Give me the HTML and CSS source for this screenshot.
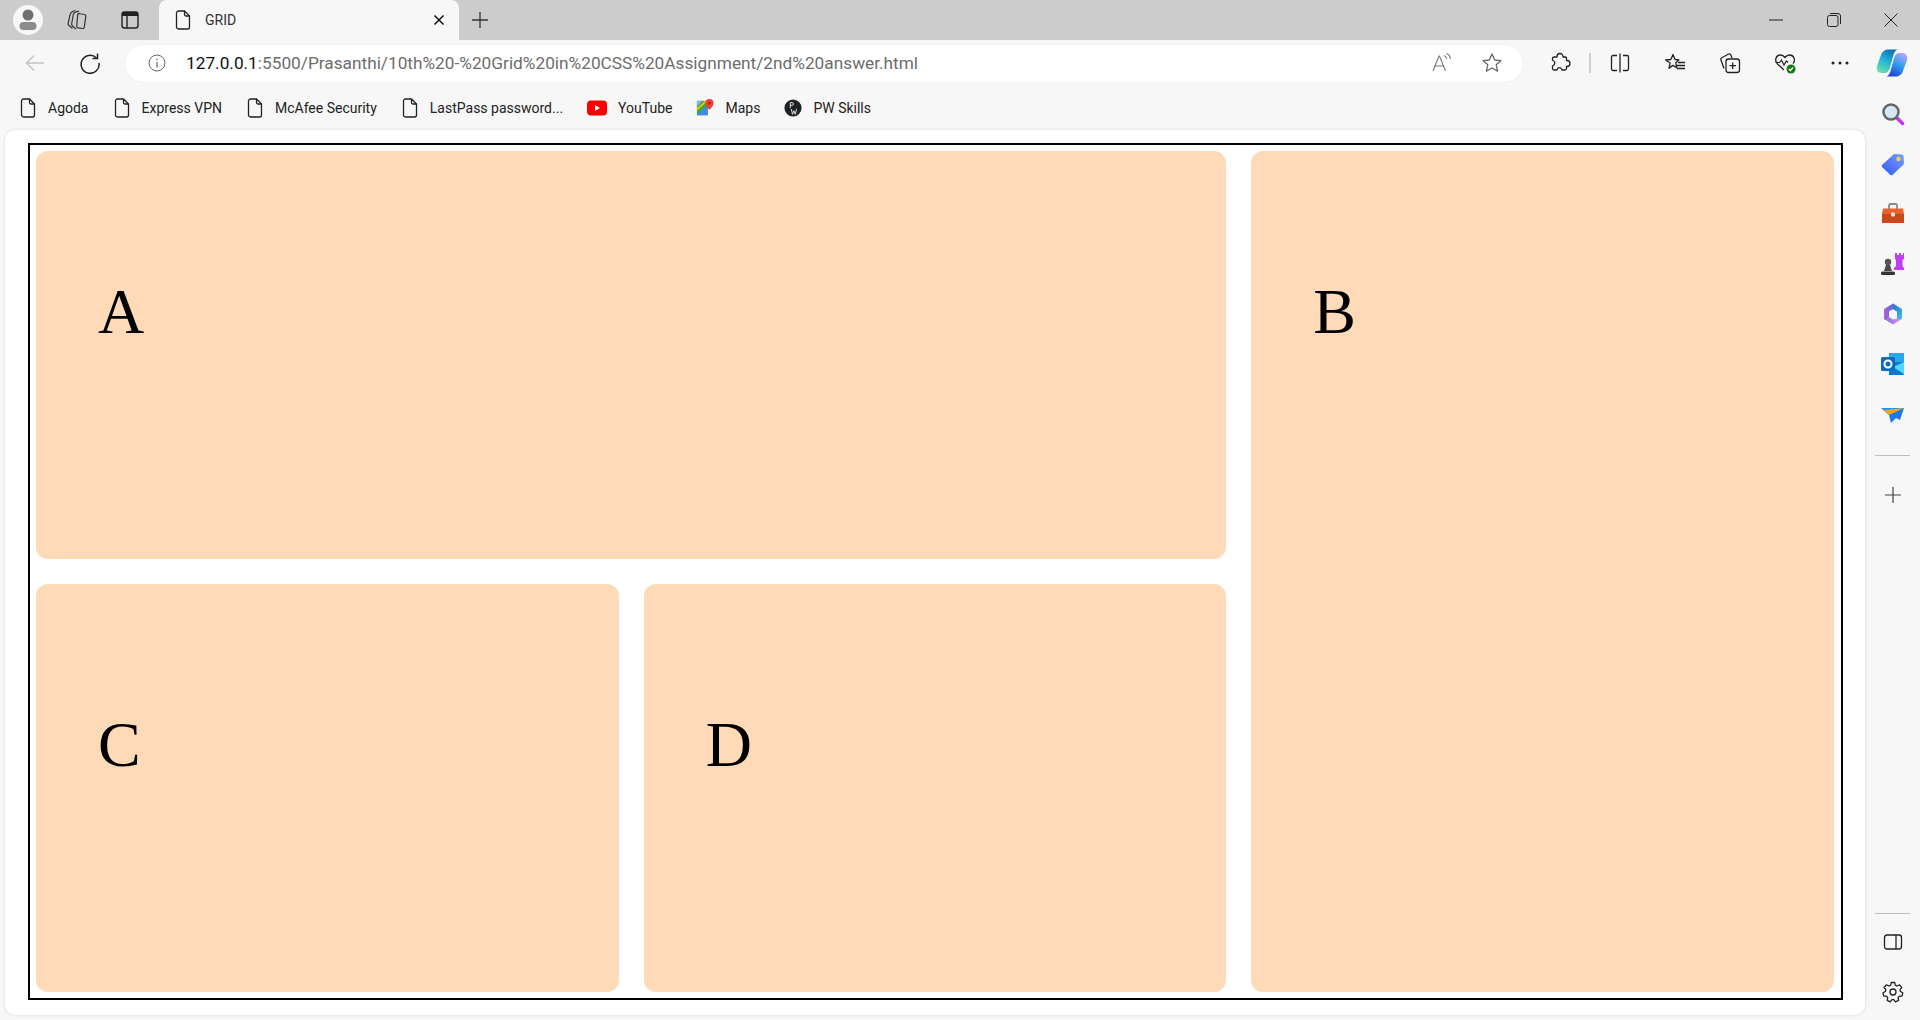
FILE: index.html
```html
<!doctype html>
<html lang="en">
<head>
  <meta charset="UTF-8" />
  <title>GRID</title>
  <link rel="stylesheet" href="styles.css">
</head>
<body>
<svg class="defs" width="0" height="0">
  <symbol id="page" viewBox="0 0 18 20">
    <path d="M4.500 1h6l5 5v11a2 2 0 0 1-2 2h-9a2 2 0 0 1-2-2V3a2 2 0 0 1 2-2z" fill="none" stroke="#222" stroke-width="1.300"/>
    <path d="M10.500 1v3.500a1.500 1.500 0 0 0 1.500 1.500h3.500" fill="none" stroke="#222" stroke-width="1.300"/>
  </symbol>
</svg>

<div class="browser">

  <!-- title bar -->
  <div class="titlebar">
    <div class="avatar">
      <svg width="18" height="22" viewBox="0 0 18 22"><circle cx="9" cy="6" r="5.500" fill="#707070"/><rect x=".5" y="13" width="17" height="8" rx="4" fill="#8c8c8c"/></svg>
    </div>
    <button class="btn">
      <svg width="24" height="24" viewBox="0 0 24 24" fill="none" stroke="#333" stroke-width="1.200" stroke-linejoin="round"><path d="M13 5.500l6.500 1a1.500 1.500 0 0 1 1.300 1.700l-1.500 11a1.500 1.500 0 0 1-1.700 1.300l-4.600-.7a1.500 1.500 0 0 1-1.300-1.700l1-11a1.500 1.500 0 0 1 1.800-1.600z"/><path d="M11 21 7.500 18c-.8-.7-1-1.500-.8-2.500l1.600-9c.2-1 1-2.300 2.700-2.700l3-.6"/><path d="M7.500 20.500 4 17.500c-.8-.7-1-1.500-.8-2.500L5 7c.3-1.300 1.200-3 3-3.700L10.500 2.500"/></svg>
    </button>
    <button class="btn">
      <svg width="20" height="20" viewBox="0 0 20 20" fill="none"><rect x="2" y="2" width="16" height="16" rx="2.500" stroke="#222" stroke-width="1.400"/><path d="M2 3.500A1.500 1.500 0 0 1 3.500 2h13A1.500 1.500 0 0 1 18 3.500V6H2z" fill="#222"/><path d="M7 6v12" stroke="#222" stroke-width="1.400"/></svg>
    </button>
    <div class="tab">
      <svg class="page-ico"><use href="#page"/></svg>
      <span class="tab-title">GRID</span>
      <svg class="tab-close" width="12" height="12" viewBox="0 0 12 12"><path d="M1.500 1.500l9 9m0-9l-9 9" stroke="#111" stroke-width="1.500"/></svg>
    </div>
    <button class="btn new-tab">
      <svg width="18" height="18" viewBox="0 0 18 18"><path d="M9 1v16M1 9h16" stroke="#333" stroke-width="1.300"/></svg>
    </button>
    <div class="win-controls">
      <div class="win-btn"><svg width="14" height="14" viewBox="0 0 14 14"><path d="M0 7h14" stroke="#222" stroke-width="1"/></svg></div>
      <div class="win-btn"><svg width="14" height="14" viewBox="0 0 14 14" fill="none" stroke="#222"><rect x=".5" y="2.500" width="10.500" height="11" rx="2"/><path d="M3 .5h8a2.500 2.500 0 0 1 2.500 2.500v8"/></svg></div>
      <div class="win-btn"><svg width="14" height="14" viewBox="0 0 14 14"><path d="M.5.5l13 13m0-13l-13 13" stroke="#222" stroke-width="1"/></svg></div>
    </div>
  </div>

  <!-- toolbar -->
  <div class="toolbar">
    <button class="btn">
      <svg width="20" height="18" viewBox="0 0 20 18" fill="none" stroke="#c4c4c4" stroke-width="1.400"><path d="M19 9H1.500M9 1.500 1.500 9 9 16.500"/></svg>
    </button>
    <button class="btn reload">
      <svg width="22" height="22" viewBox="0 0 22 22" fill="none" stroke="#222" stroke-width="1.500"><path d="M17.500 6A9 9 0 1 0 20 11"/><path d="M18.500 1.500V6.500H13.500"/></svg>
    </button>
    <div class="addressbar">
      <svg class="info" width="18" height="18" viewBox="0 0 18 18" fill="none" stroke="#666"><circle cx="9" cy="9" r="8"/><path d="M9 8v5.500M9 4.800v1.400" stroke-width="1.200"/></svg>
      <span class="url"><span class="host">127.0.0.1</span>:5500/Prasanthi/10th%20-%20Grid%20in%20CSS%20Assignment/2nd%20answer.html</span>
      <svg class="read-ico" width="22" height="22" viewBox="0 0 22 22" fill="none" stroke="#777" stroke-width="1.100"><path d="M2 19 8 4h.5l6 15M4 14h9"/><path d="M13 3.500c1.500.5 2.500 2 2.700 3.500M15.500 1.500c2.300 1 3.800 3 4 5.500"/></svg>
      <svg class="star-ico" width="22" height="22" viewBox="0 0 22 22" fill="none" stroke="#666" stroke-width="1.300"><path d="M11 2l2.700 6 6.300.6-4.800 4.200 1.400 6.400L11 16l-5.600 3.200 1.400-6.400L2 8.600 8.300 8z" stroke-linejoin="round"/></svg>
    </div>
    <div class="tools">
      <button class="btn">
        <svg width="22" height="22" viewBox="0 0 22 22" fill="none" stroke="#222" stroke-width="1.300" stroke-linejoin="round"><path d="M8 4.500a3 3 0 0 1 6 0v.5h2.500a1 1 0 0 1 1 1v2.500h.5a3 3 0 0 1 0 6h-.5v2a1.500 1.500 0 0 1-1.500 1.500h-2.500c-.5 0-.7-.3-.9-.8a2.300 2.300 0 0 0-4.300 0c-.2.500-.4.800-.9.800H5a1.500 1.500 0 0 1-1.500-1.500v-2.500l.5-.3a2.800 2.800 0 0 0 0-5.200l-.5-.3V6.500A1.500 1.500 0 0 1 5 5h3z"/></svg>
      </button>
      <div class="tool-sep"></div>
      <button class="btn">
        <svg width="22" height="22" viewBox="0 0 22 22" fill="none" stroke="#222" stroke-width="1.300"><path d="M8 3.500H4A1.500 1.500 0 0 0 2.500 5v12A1.500 1.500 0 0 0 4 18.500h4M14 3.500h4A1.500 1.500 0 0 1 19.500 5v12a1.500 1.500 0 0 1-1.500 1.500h-4M11 1.500v19"/></svg>
      </button>
      <button class="btn">
        <svg width="22" height="22" viewBox="0 0 22 22" fill="none" stroke="#222" stroke-width="1.300"><path d="M9 2.500l2 5 4 .3-3.200 3 1 5-3.800-2.400-4 2.900 1.200-5.300L1.500 8l5.300-.5z" stroke-linejoin="round"/><path d="M14 10.500h7M13 13.500h8M13 16.500h8"/></svg>
      </button>
      <button class="btn">
        <svg width="22" height="22" viewBox="0 0 22 22" fill="none" stroke="#222" stroke-width="1.300"><rect x="7" y="7" width="13.500" height="13.500" rx="2.500"/><path d="M13.700 10.500v6.500M10.500 13.700h6.500"/><path d="M5 16.500 2 8a2 2 0 0 1 1.300-2.500L9.500 2a2 2 0 0 1 2.500 1.300L13 6"/></svg>
      </button>
      <button class="btn">
        <svg width="24" height="24" viewBox="0 0 24 24" fill="none"><path d="M11 19 4.500 13C1 9.500 3 4 7.500 4c2 0 3.500 1.200 4.500 2.500C13 5.200 14.500 4 16.500 4c4.500 0 6.500 5 3.500 8.500" stroke="#222" stroke-width="1.300"/><path d="M2.500 11.500h4l2-2.500 2.500 5 2.500-4 1.500 1.500" stroke="#222" stroke-width="1.200"/><circle cx="18" cy="18" r="4.500" fill="#107c10"/><path d="M16 18l1.500 1.500 2.500-3" stroke="#fff" stroke-width="1.200"/></svg>
      </button>
      <button class="btn">
        <svg width="18" height="4" viewBox="0 0 18 4" fill="#222"><circle cx="2" cy="2" r="1.500"/><circle cx="9" cy="2" r="1.500"/><circle cx="16" cy="2" r="1.500"/></svg>
      </button>
      <button class="btn copilot">
        <svg width="32" height="28" viewBox="0 0 32 28"><defs><linearGradient id="cpa" x1="0.700" y1="0" x2="0.200" y2="1"><stop offset="0" stop-color="#0f6fb5"/><stop offset=".5" stop-color="#1fb6d8"/><stop offset="1" stop-color="#6fe0a8"/></linearGradient><linearGradient id="cpb" x1="0.300" y1="1" x2="0.800" y2="0"><stop offset="0" stop-color="#1c45d0"/><stop offset=".5" stop-color="#2f9cf0"/><stop offset="1" stop-color="#b8a8f4"/></linearGradient></defs><path d="M13 .5h8.500c-2.500 1-3.500 3.500-4.500 7l-3 11c-1 3.500-2.500 5.500-6 5.500H5.500C1.500 24 0 20.500 1 17L5 6c1-3.500 4-5.500 8-5.500z" fill="url(#cpa)"/><path d="M19 27.500h-8.500c2.500-1 3.500-3.500 4.500-7l3-11c1-3.500 2.500-5.500 6-5.500h2.500c4 0 5.500 3.500 4.500 7l-4 11c-1 3.500-4 5.500-8 5.500z" fill="url(#cpb)"/></svg>
      </button>
    </div>
  </div>

  <div class="content">
    <div class="main-col">
      <!-- favourites -->
      <div class="bookmarks">
        <a class="bm"><svg class="page-ico"><use href="#page"/></svg>Agoda</a>
        <a class="bm"><svg class="page-ico"><use href="#page"/></svg>Express VPN</a>
        <a class="bm"><svg class="page-ico"><use href="#page"/></svg>McAfee Security</a>
        <a class="bm"><svg class="page-ico"><use href="#page"/></svg>LastPass password...</a>
        <a class="bm"><svg class="fav-ico yt" viewBox="0 0 20 16"><rect width="20" height="15" y=".5" rx="4" fill="#f00"/><path d="M8 5l5 3-5 3z" fill="#fff"/></svg>YouTube</a>
        <a class="bm"><svg class="fav-ico" viewBox="0 0 20 20"><path d="M1 2h12v16H1z" fill="#34a853"/><path d="M1 18 13 7v11z" fill="#4285f4"/><path d="M1 2h6l-6 6z" fill="#8ab4f8"/><path d="M1 13 13 2h-3L1 10z" fill="#fbbc04"/><path d="M15 0a4.500 4.500 0 0 1 4.500 4.500C19.500 8 15 12 15 12s-4.500-4-4.500-7.500A4.500 4.500 0 0 1 15 0z" fill="#ea4335"/><circle cx="15" cy="4.500" r="1.500" fill="#a3261c"/></svg>Maps</a>
        <a class="bm"><svg class="fav-ico" viewBox="0 0 20 20"><circle cx="10" cy="10" r="9.500" fill="#1f2124"/><path d="M7 4v6M7 4h2a1.500 1.500 0 0 1 0 3H7M8 11l1.500 6 1.500-4 1.500 4 1.500-6" fill="none" stroke="#eee" stroke-width="1"/></svg>PW Skills</a>
      </div>

      <!-- the actual page -->
      <div class="page">
        <div class="container">
          <div class="item item-a">A</div>
          <div class="item item-b">B</div>
          <div class="item">C</div>
          <div class="item">D</div>
        </div>
      </div>
    </div>

    <!-- sidebar -->
    <div class="sidebar">
      <div class="side-ico">
        <svg width="24" height="24" viewBox="0 0 24 24" fill="none"><path d="M15 15l6.500 6.500" stroke="#c238e8" stroke-width="3.500" stroke-linecap="round"/><circle cx="10" cy="10" r="7.500" fill="#d5e8f5" stroke="#666" stroke-width="2.500"/></svg>
      </div>
      <div class="side-ico">
        <svg width="24" height="24" viewBox="0 0 24 24"><defs><linearGradient id="tag" x1="0" y1="1" x2="1" y2="0"><stop offset="0" stop-color="#2f5cf6"/><stop offset="1" stop-color="#7c9cff"/></linearGradient></defs><path d="M1.500 12.500 12.500 2.500a2 2 0 0 1 1.500-.5l7 .5a1.500 1.500 0 0 1 1.500 1.500l.5 7a2 2 0 0 1-.5 1.500L12 22.500a2 2 0 0 1-3 0l-7.500-7a2 2 0 0 1 0-3z" fill="url(#tag)"/><circle cx="17.500" cy="7" r="2.200" fill="#f7d33c"/></svg>
      </div>
      <div class="side-ico">
        <svg width="24" height="24" viewBox="0 0 24 24"><path d="M8 7V3.500A1.500 1.500 0 0 1 9.500 2h5A1.500 1.500 0 0 1 16 3.500V7" fill="none" stroke="#8a8a8a" stroke-width="1.800"/><path d="M2 6.500h20L23 12H1z" fill="#e8622a"/><path d="M1 12h22v9H1z" fill="#c9481a"/><rect x="10" y="10.500" width="4" height="4" rx="1" fill="#ddd"/></svg>
      </div>
      <div class="side-ico">
        <svg width="24" height="24" viewBox="0 0 24 24"><path d="M14 1h2v2h2V1h2v2h2V1h1v6l-1.500 1v6l1.500 2v2H13v-2l2-2V8l-1-1z" fill="#c03ef0"/><circle cx="7" cy="10" r="3.200" fill="#555"/><path d="M5 13h4l2 6H3z" fill="#4a4a4a"/><rect y="19.500" width="14" height="3.500" rx="1.500" fill="#333"/></svg>
      </div>
      <div class="side-ico">
        <svg width="24" height="24" viewBox="0 0 24 24"><defs><linearGradient id="m3a" x1="0" y1="0" x2="1" y2="0"><stop offset="0" stop-color="#b060d8"/><stop offset="1" stop-color="#3a6fd8"/></linearGradient><linearGradient id="m3b" x1="0" y1="0" x2="1" y2="1"><stop offset="0" stop-color="#2a70c8"/><stop offset="1" stop-color="#3fc0e8"/></linearGradient><linearGradient id="m3c" x1="0" y1="0" x2="1" y2="0"><stop offset="0" stop-color="#8a70e0"/><stop offset="1" stop-color="#d8a0e8"/></linearGradient></defs><path d="M12 1.500 3 7v10l2.500 1.500L8 15V9.500L12 7l4 2.500z" fill="url(#m3a)"/><path d="M12 1.500 21 7v10l-5 .5V9.500L12 7z" fill="url(#m3b)"/><path d="M5.500 18.500 12 22.500l9-5.500-5-.5-4 1-4-2.500z" fill="url(#m3c)"/></svg>
      </div>
      <div class="side-ico">
        <svg width="24" height="24" viewBox="0 0 24 24"><path d="M8 1h15v9H8z" fill="#28a8ea"/><path d="M8 10h15v12a1 1 0 0 1-1 1H8z" fill="#0f78d4"/><path d="M23 10v12L12 15z" fill="#50d9ff"/><rect y="5" width="14" height="14" rx="1.500" fill="#0f6cbd"/><circle cx="7" cy="12" r="3.500" fill="none" stroke="#fff" stroke-width="2"/></svg>
      </div>
      <div class="side-ico">
        <svg width="24" height="24" viewBox="0 0 24 24"><path d="M0 6h23L8 13z" fill="#2a8cf0"/><path d="M4 8l4 5 2 8 5-5 4 2 4-12z" fill="#1f78e6"/><path d="M3 8l20-2-15 7z" fill="#f2a71b"/></svg>
      </div>
      <div class="side-sep"></div>
      <div class="side-ico">
        <svg width="16" height="16" viewBox="0 0 16 16"><path d="M8 0v16M0 8h16" stroke="#444" stroke-width="1.200"/></svg>
      </div>
      <div class="side-bottom">
        <div class="side-sep"></div>
        <div class="side-ico">
          <svg width="20" height="18" viewBox="0 0 20 18" fill="none" stroke="#222" stroke-width="1.300"><rect x="1.500" y="2" width="17" height="14" rx="2.500"/><path d="M13 2v14"/></svg>
        </div>
        <div class="side-ico">
          <svg width="22" height="22" viewBox="0 0 22 22" fill="none" stroke="#222" stroke-width="1.300"><circle cx="11" cy="11" r="3"/><path d="M9.300 1.500h3.400l.6 2.700 1.700.8 2.500-1.200 2.200 2.700-1.700 2.100.4 1.900 2.400 1.300-.8 3.300-2.700.1-1.200 1.500.5 2.700-3.100 1.400-1.700-2.100h-1.800l-1.700 2.100-3.100-1.400.5-2.700-1.200-1.500-2.700-.1-.8-3.300 2.400-1.300.4-1.900-1.700-2.100 2.200-2.700L7 5l1.700-.8z" stroke-linejoin="round"/></svg>
        </div>
      </div>
    </div>
  </div>
</div>
</body>
</html>
```

FILE: styles.css
```css
* {
  box-sizing: border-box;
}

body {
  margin: 0;
  font-family: "Roboto", "Liberation Sans", sans-serif;
  color: #222;
  overflow: hidden;
}

.defs {
  display: block;
  height: 0;
}

.browser {
  display: flex;
  flex-direction: column;
  height: 100vh;
  background-color: #f7f7f7;
}

button {
  font: inherit;
  background: none;
  border: none;
  padding: 0;
}

.btn {
  display: flex;
  align-items: center;
  justify-content: center;
  flex: none;
  width: 36px;
  height: 36px;
}

/* title bar */
.titlebar {
  display: flex;
  align-items: center;
  height: 40px;
  padding-left: 13px;
  background-color: #cccccc;
}

.avatar {
  display: flex;
  align-items: center;
  justify-content: center;
  width: 30px;
  height: 30px;
  margin-right: 16px;
  border-radius: 50%;
  background-color: #f7f7f7;
  flex: none;
}

.titlebar .btn + .btn {
  margin-left: 17px;
}

.tab {
  display: flex;
  align-items: center;
  align-self: flex-end;
  width: 300px;
  height: 40px;
  margin-left: 11px;
  padding: 0 14px 0 15px;
  background-color: #f7f7f7;
  border-radius: 8px 8px 0 0;
}

.page-ico {
  width: 18px;
  height: 20px;
  flex: none;
}

.tab-title {
  flex: 1;
  margin-left: 13px;
  font-size: 14px;
  color: #333;
}

.titlebar .new-tab {
  margin-left: 3px;
}

.win-controls {
  display: flex;
  margin-left: auto;
}

.win-btn {
  display: flex;
  align-items: center;
  justify-content: center;
  width: 57.5px;
  height: 40px;
}

/* toolbar */
.toolbar {
  display: flex;
  align-items: center;
  height: 46px;
  padding: 0 10px 0 17px;
}

.toolbar .reload {
  margin-left: 19px;
}

.addressbar {
  display: flex;
  align-items: center;
  flex: 1;
  height: 37px;
  margin: 0 19px 0 17px;
  padding: 0 20px 0 23px;
  background-color: #fff;
  border-radius: 19px;
  box-shadow: 0 0 2px rgba(0, 0, 0, 0.08);
}

.info {
  flex: none;
  margin-right: 20px;
}

.url {
  flex: 1;
  font-size: 17.25px;
  color: #6d6d6d;
  white-space: nowrap;
}

.host {
  color: #111;
}

.read-ico {
  margin-right: 28px;
}

.tools {
  display: flex;
  align-items: center;
  gap: 19px;
}

.tools .copilot {
  margin-left: -3px;
}

.tool-sep {
  width: 2px;
  height: 20px;
  margin: 0 -8px;
  background-color: #cfcfcf;
}

.content {
  display: flex;
  flex: 1;
  min-height: 0;
}

.main-col {
  display: flex;
  flex-direction: column;
  flex: 1;
  min-width: 0;
  padding: 0 0 5px 5px;
}

/* favourites */
.bookmarks {
  display: flex;
  align-items: center;
  gap: 24px;
  height: 44px;
  margin-left: -5px;
  padding-left: 19px;
  font-size: 14px;
  flex: none;
}

.bm {
  display: flex;
  align-items: center;
  gap: 11px;
  color: #222;
  white-space: nowrap;
}

.fav-ico {
  width: 18px;
  height: 18px;
  flex: none;
}

.fav-ico.yt {
  width: 20px;
}

/* page */
.page {
  display: flex;
  flex: 1;
  min-height: 0;
  padding: 13px 22px 15px 23px;
  background-color: #fff;
  border-radius: 10px;
  box-shadow: 0 0 3px rgba(0, 0, 0, 0.14);
}

.container {
  display: grid;
  flex: 1;
  grid-template-columns: repeat(3, 1fr);
  grid-template-rows: repeat(2, 1fr);
  gap: 25px;
  padding: 6px 7px 6px 6px;
  border: 2px solid #000;
}

.item {
  padding: 124px 62px 0;
  background-color: #ffdab9;
  border-radius: 12px;
  font-family: "Liberation Serif", serif;
  font-size: 64px;
  color: #000;
}

.item-a {
  grid-column: span 2;
}

.item-b {
  grid-column: 3;
  grid-row: 1 / span 2;
}

/* sidebar */
.sidebar {
  display: flex;
  flex-direction: column;
  align-items: center;
  flex: none;
  width: 55px;
  padding: 3px 0;
}

.side-ico {
  display: flex;
  align-items: center;
  justify-content: center;
  height: 50px;
}

.side-sep {
  width: 35px;
  height: 1px;
  margin: 16px 0 14px;
  background-color: #bdbdbd;
}

.side-bottom {
  display: flex;
  flex-direction: column;
  align-items: center;
  margin-top: auto;
}

.side-bottom .side-sep {
  margin: 0 0 3px;
}
```
